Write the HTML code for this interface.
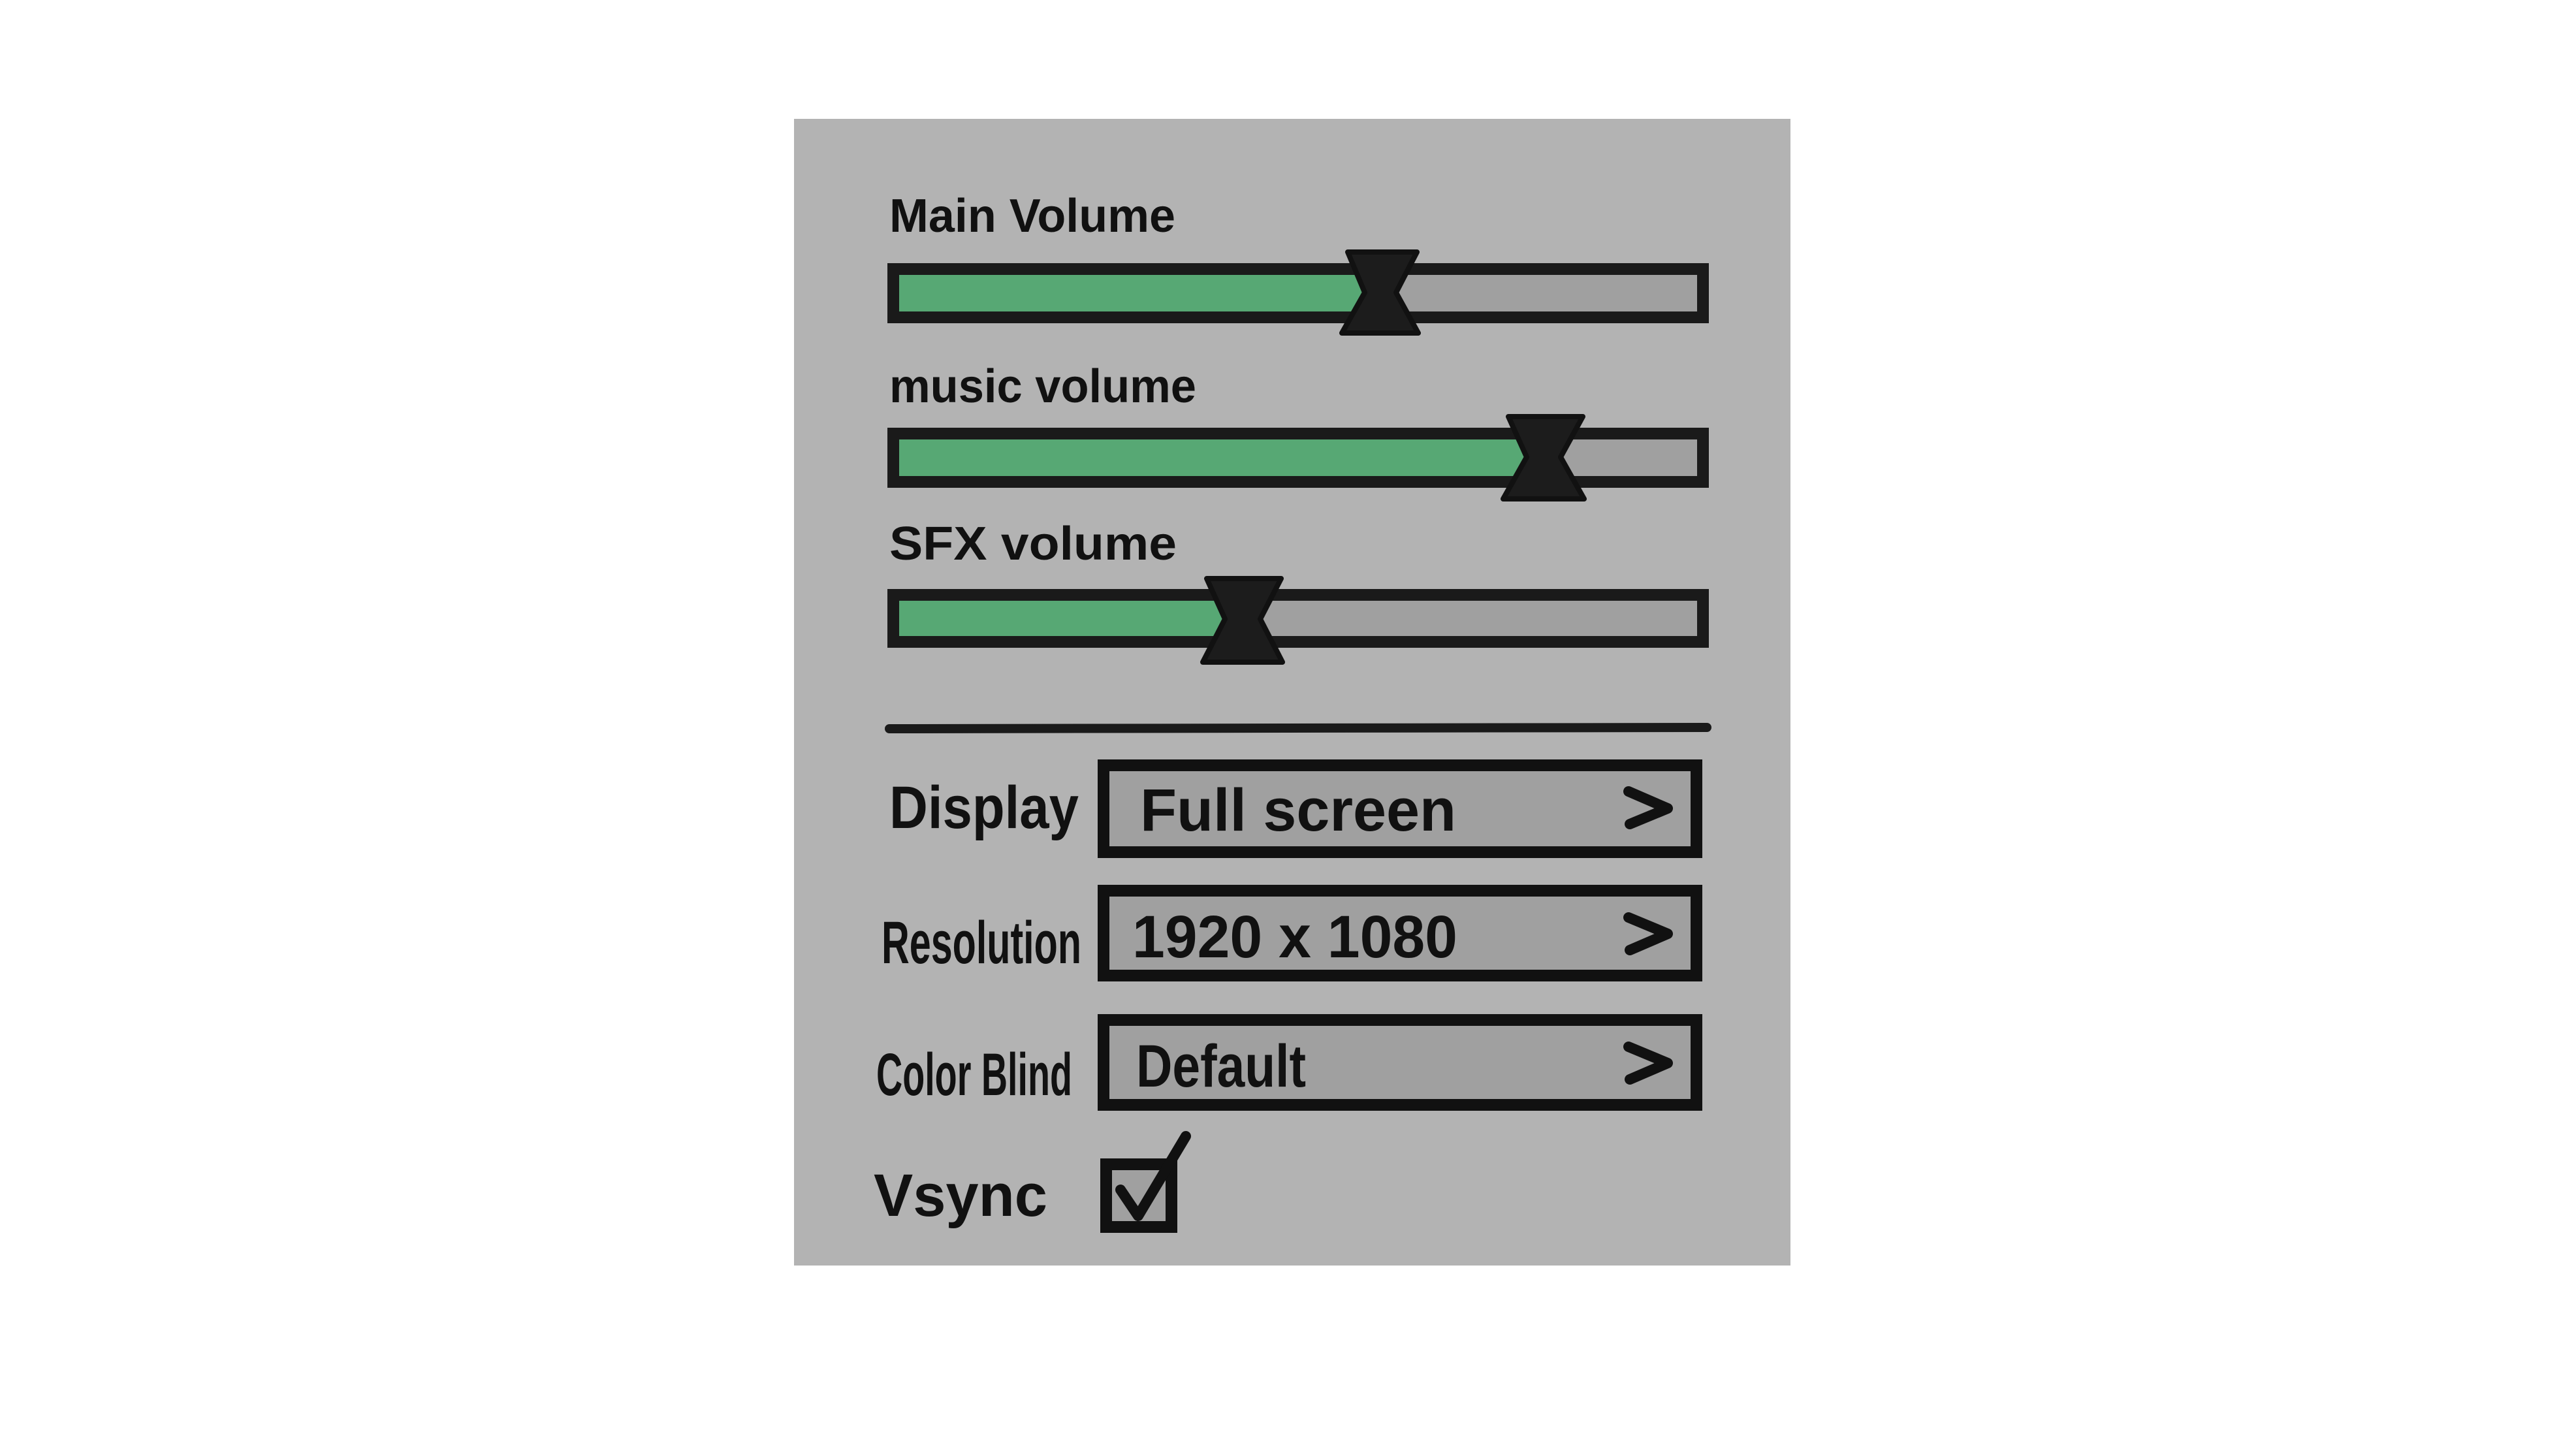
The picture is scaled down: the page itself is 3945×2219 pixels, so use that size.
<!DOCTYPE html>
<html><head><meta charset="utf-8"><style>
html,body{margin:0;padding:0;background:#fff;width:3945px;height:2219px;overflow:hidden}
svg{position:absolute;left:0;top:0}
text{font-family:"Liberation Sans",sans-serif;fill:#111}
</style></head><body>
<svg width="3945" height="2219" viewBox="0 0 3945 2219">
<rect x="1216" y="182" width="1526" height="1756" fill="#b3b3b3"/>
<g font-size="72" font-weight="bold">
<text x="1362" y="355" textLength="438" lengthAdjust="spacingAndGlyphs">Main Volume</text>
<text x="1362" y="616" textLength="470" lengthAdjust="spacingAndGlyphs">music volume</text>
<text x="1362" y="857" textLength="440" lengthAdjust="spacingAndGlyphs">SFX volume</text>
</g>
<g stroke="#1a1a1a" stroke-width="18">
<rect x="1368" y="412" width="1240" height="74" fill="#a0a0a0"/>
<rect x="1368" y="664" width="1240" height="74" fill="#a0a0a0"/>
<rect x="1368" y="911" width="1240" height="72" fill="#a0a0a0"/>
</g>
<rect x="1377" y="421" width="712" height="56" fill="#57a874"/>
<rect x="1377" y="673" width="958" height="56" fill="#57a874"/>
<rect x="1377" y="920" width="500" height="54" fill="#57a874"/>
<g fill="#1c1c1c" stroke="#111" stroke-width="8" stroke-linejoin="round">
<path d="M2064 386 L2170 386 L2138 448 L2172 510 L2055 510 L2090 448 Z"/>
<path d="M2310 638 L2424 638 L2390 700 L2426 764 L2302 764 L2338 700 Z"/>
<path d="M1848 886 L1962 886 L1930 948 L1964 1014 L1842 1014 L1876 948 Z"/>
</g>
<line x1="1362" y1="1116" x2="2614" y2="1114" stroke="#1a1a1a" stroke-width="14" stroke-linecap="round"/>
<g stroke="#111" stroke-width="18" fill="#a0a0a0">
<rect x="1690" y="1172" width="908" height="133"/>
<rect x="1690" y="1364" width="908" height="130"/>
<rect x="1690" y="1562" width="908" height="130"/>
<rect x="1694" y="1783" width="100" height="96"/>
</g>
<g fill="none" stroke="#111" stroke-width="16" stroke-linecap="round" stroke-linejoin="round">
<path d="M2494 1212 L2554 1238 L2496 1262"/>
<path d="M2494 1405 L2554 1430 L2496 1455"/>
<path d="M2494 1603 L2554 1628 L2496 1653"/>
<path d="M1716 1822 L1743 1862 L1816 1740"/>
</g>
<g font-size="92" font-weight="bold">
<text x="1362" y="1268" textLength="290" lengthAdjust="spacingAndGlyphs">Display</text>
<text x="1350" y="1475" textLength="306" lengthAdjust="spacingAndGlyphs">Resolution</text>
<text x="1342" y="1677" textLength="300" lengthAdjust="spacingAndGlyphs">Color Blind</text>
<text x="1338" y="1862" textLength="266" lengthAdjust="spacingAndGlyphs">Vsync</text>
<text x="1746" y="1272" textLength="484" lengthAdjust="spacingAndGlyphs">Full screen</text>
<text x="1734" y="1466" textLength="498" lengthAdjust="spacingAndGlyphs">1920 x 1080</text>
<text x="1740" y="1664" textLength="260" lengthAdjust="spacingAndGlyphs">Default</text>
</g>
</svg>
</body></html>
